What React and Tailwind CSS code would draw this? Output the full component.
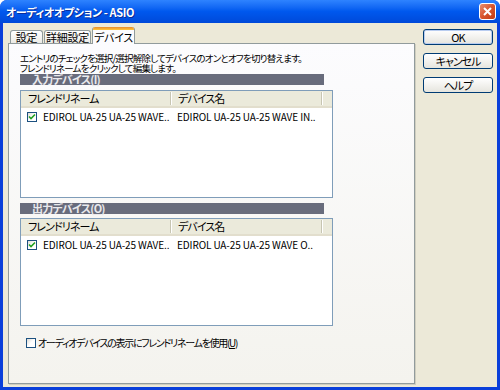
const jp = "font-['Noto_Sans_CJK_JP',sans-serif] [font-feature-settings:'palt']"

function CheckBox({ checked }) {
  return (
    <div className="w-[10px] h-[10px] shrink-0 border border-[#1C5180] bg-gradient-to-br from-[#DCDBD5] via-white to-white flex items-center justify-center">
      {checked && (
        <svg width="8" height="8" viewBox="0 0 8 8">
          <path d="M1 3.5 L3 5.5 L7 1.5" stroke="#21A121" strokeWidth="1.6" fill="none" />
        </svg>
      )}
    </div>
  )
}

function GroupBar({ label, keyChar }) {
  return (
    <div className="w-[304px] h-[11px] bg-[#686C7C] pl-[12px] text-[11px] leading-[11px] font-bold tracking-[-0.8px] text-[#E9E9EC] whitespace-nowrap">
      {label}(<span className="underline">{keyChar}</span>)
    </div>
  )
}

function DeviceList({ friendly, device }) {
  return (
    <div className="w-[313px] h-[108px] border border-[#7F9DB9] bg-white">
      <div className="flex items-center h-[17px] bg-[#EBEADB] border-b-2 border-[#E2DECD] text-[11px] leading-[11px] tracking-[-0.9px] text-black">
        <div className="w-[149px] pl-[7px]">フレンドリネーム</div>
        <div className="w-px h-[13px] bg-[#C7C5B2]" />
        <div className="w-px h-[13px] bg-white" />
        <div className="w-[149px] pl-[6px]">デバイス名</div>
        <div className="w-px h-[13px] bg-[#C7C5B2]" />
        <div className="w-px h-[13px] bg-white" />
      </div>
      <div className="flex items-center h-[13px] mt-[2px] text-[10px] leading-[11px] tracking-[-0.1px] text-black">
        <div className="w-[156px] shrink-0 flex items-center pl-[6px] gap-[6px]">
          <CheckBox checked />
          <span className="whitespace-nowrap">{friendly}</span>
        </div>
        <span className="whitespace-nowrap">{device}</span>
      </div>
    </div>
  )
}

function XpButton({ children, primary }) {
  return (
    <button
      className={
        primary
          ? "w-[70px] h-[16px] rounded-[3px] border border-[#003C74] bg-gradient-to-b from-white to-[#E6E5DE] shadow-[inset_0_0_0_1px_#B9CDF0] text-[11px] leading-[11px] tracking-[-1px] text-black flex items-center justify-center"
          : "w-[70px] h-[16px] rounded-[3px] border border-[#003C74] bg-gradient-to-b from-white to-[#E6E5DE] text-[11px] leading-[11px] tracking-[-1px] text-black flex items-center justify-center"
      }
    >
      {children}
    </button>
  )
}

export default function App() {
  return (
    <div className={`w-[500px] h-[390px] bg-[#0A3FDA] rounded-t-[7px] flex flex-col ${jp}`}>
      {/* title bar */}
      <div className="h-[23px] rounded-t-[7px] bg-gradient-to-b from-[#2E83FF] via-[#0058EE] to-[#0049D9] flex items-center justify-between pl-[6px] pr-[4px]">
        <span className="text-white font-bold text-[11px] leading-[12px] tracking-[-0.4px] [text-shadow:1px_1px_0_#0A2C9A]">
          オーディオオプション - ASIO
        </span>
        <div className="w-[17px] h-[17px] rounded-[3px] border border-white bg-gradient-to-br from-[#E88D6F] via-[#D8552C] to-[#C03A12] flex items-center justify-center">
          <svg width="9" height="9" viewBox="0 0 9 9">
            <path d="M1 1 L8 8 M8 1 L1 8" stroke="white" strokeWidth="2" />
          </svg>
        </div>
      </div>

      {/* client area */}
      <div className="flex-1 mx-[3px] mb-[3px] bg-[#ECE9D8] flex text-black">
        <div className="ml-[5px] mt-[5px] w-[407px] flex flex-col">
          <div className="flex items-end h-[15px] pl-[2px] gap-[1px] text-[11px] leading-[11px] tracking-[-0.3px]">
            <div className="w-[33px] h-[13px] border border-b-0 border-[#919B9C] rounded-t-[3px] bg-gradient-to-b from-white to-[#ECEBE5] flex items-center justify-center">
              設定
            </div>
            <div className="w-[47px] h-[13px] border border-b-0 border-[#919B9C] rounded-t-[3px] bg-gradient-to-b from-white to-[#ECEBE5] flex items-center justify-center">
              詳細設定
            </div>
            <div className="relative z-10 -mb-px w-[43px] h-[17px] border-x border-[#919B9C] rounded-t-[3px] bg-[#FCFCFE] flex flex-col">
              <div className="h-[3px] rounded-t-[2px] bg-gradient-to-b from-[#E68B2C] to-[#FFC83C]" />
              <div className="flex-1 flex items-center justify-center">デバイス</div>
            </div>
          </div>
          <div className="w-[407px] h-[341px] border border-[#919B9C] bg-gradient-to-b from-[#FCFCFE] to-[#F4F3EE] shadow-[1px_1px_0_#D0CEBF] pl-[11px] pt-[9px]">
            <div className="text-[9.5px] leading-[10px] tracking-[-0.8px] whitespace-nowrap">
              <p>エントリのチェックを選択/選択解除してデバイスのオンとオフを切り替えます。</p>
              <p>フレンドリネームをクリックして編集します。</p>
            </div>
            <div className="mt-[1px]">
              <GroupBar label="入力デバイス" keyChar="I" />
            </div>
            <div className="mt-[5px]">
              <DeviceList friendly="EDIROL UA-25 UA-25 WAVE.." device="EDIROL UA-25 UA-25 WAVE IN.." />
            </div>
            <div className="mt-[5px]">
              <GroupBar label="出力デバイス" keyChar="O" />
            </div>
            <div className="mt-[4px]">
              <DeviceList friendly="EDIROL UA-25 UA-25 WAVE.." device="EDIROL UA-25 UA-25 WAVE O.." />
            </div>
            <div className="mt-[11px] ml-[6px] flex items-center gap-[2px] text-[10px] leading-[11px] tracking-[-1.3px] whitespace-nowrap">
              <CheckBox />
              <span>
                オーディオデバイスの表示にフレンドリネームを使用(<span className="underline">U</span>)
              </span>
            </div>
          </div>
        </div>

        <div className="ml-[8px] mt-[6px] flex flex-col gap-[8px]">
          <XpButton primary>OK</XpButton>
          <XpButton>キャンセル</XpButton>
          <XpButton>ヘルプ</XpButton>
        </div>
      </div>
    </div>
  )
}
